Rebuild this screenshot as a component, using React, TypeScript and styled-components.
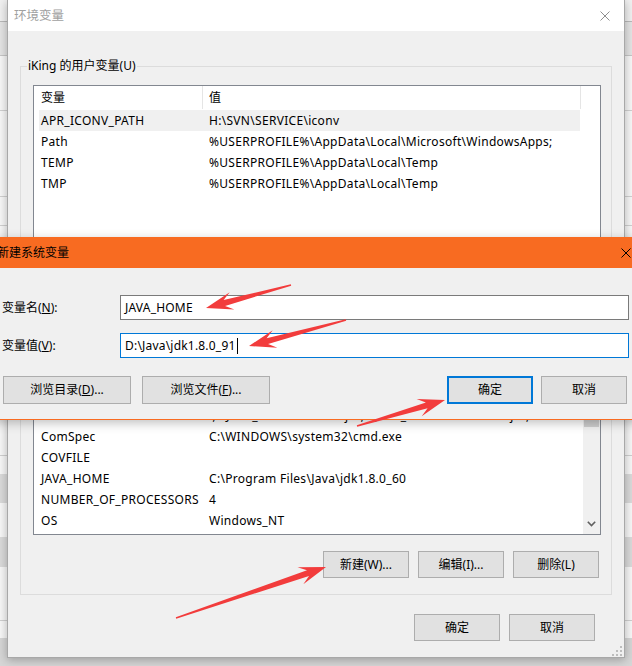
import React from "react";
import styled, { createGlobalStyle } from "styled-components";

const GlobalStyle = createGlobalStyle`
  html, body { margin: 0; padding: 0; }
  body {
    width: 632px; height: 666px; overflow: hidden; background: #f3f3f3;
    font-family: "Noto Sans", "Noto Sans CJK SC", sans-serif;
    font-size: 12px; color: #000;
  }
  #root { width: 632px; height: 666px; }
  * { box-sizing: border-box; }
`;

const Desktop = styled.div`
  position: relative;
  width: 632px;
  height: 666px;
  overflow: hidden;
  background-color: #f5f5f5;
  background-image:
    linear-gradient(to bottom,
      #f0f0f0 0, #f0f0f0 21px, #b9b9b9 21px, #b9b9b9 22px,
      #e4e4e4 22px, #e4e4e4 55px, #c6c6c6 55px, #c6c6c6 56px,
      #f7f7f7 56px, #f7f7f7 110px, #d0d0d0 110px, #d0d0d0 111px,
      #f7f7f7 111px, #f7f7f7 196px, #d0d0d0 196px, #d0d0d0 197px,
      #f7f7f7 197px, #f7f7f7 225px, #d0d0d0 225px, #d0d0d0 226px,
      #f7f7f7 226px, #f7f7f7 455px, #cfcfcf 455px, #cfcfcf 456px,
      #f7f7f7 456px, #f7f7f7 474px, #dadada 474px, #dadada 503px,
      #f7f7f7 503px, #f7f7f7 537px, #dadada 537px, #dadada 567px,
      #f7f7f7 567px, #f7f7f7 620px, #cfcfcf 620px, #cfcfcf 621px,
      #f7f7f7 621px, #f7f7f7 638px, #d6d6d6 638px, #d6d6d6 666px);
`;

/* ---------- main window ---------- */

const MainWindow = styled.div`
  position: absolute;
  left: 7px;
  top: 0;
  width: 618px;
  height: 658px;
  border: 1px solid #a8a8a8;
  border-top: none;
  background: #f0f0f0;
  display: flex;
  flex-direction: column;
  box-shadow: 0 2px 9px rgba(0, 0, 0, 0.28);
`;

const TitleBar = styled.div<{ $active?: boolean }>`
  flex: none;
  height: ${(p) => (p.$active ? 30 : 31)}px;
  background: ${(p) => (p.$active ? "#f86b21" : "#ffffff")};
  color: ${(p) => (p.$active ? "#000" : "#a0a0a0")};
  font-size: ${(p) => (p.$active ? 12 : 12.5)}px;
  display: flex;
  align-items: center;
  justify-content: space-between;
  padding: ${(p) => (p.$active ? "0 18px 0 6px" : "0 14px 0 6px")};
  line-height: 16px;
  white-space: nowrap;
`;

const CloseIcon = ({ color }: { color: string }) => (
  <svg width="10" height="10" viewBox="0 0 10 10">
    <path d="M0.5 0.5 L9.5 9.5 M9.5 0.5 L0.5 9.5" stroke={color} strokeWidth="1" fill="none" />
  </svg>
);

const WindowBody = styled.div`
  flex: 1;
  display: flex;
  flex-direction: column;
  padding: 35px 12px 0 12px;
  position: relative;
`;

const GroupBox = styled.div<{ $mt?: number }>`
  position: relative;
  border: 1px solid #dcdcdc;
  padding: 18px 10px 16px 12px;
  margin-top: ${(p) => p.$mt ?? 0}px;
`;

const GroupLabel = styled.span`
  position: absolute;
  top: -9px;
  left: 6px;
  padding: 0 1px;
  background: #f0f0f0;
  line-height: 16px;
  white-space: nowrap;
`;

const ListView = styled.div<{ $h: number }>`
  height: ${(p) => p.$h}px;
  border: 1px solid #828790;
  background: #fff;
  display: flex;
  overflow: hidden;
`;

const ListMain = styled.div`
  flex: 1;
  min-width: 0;
  display: flex;
  flex-direction: column;
`;

const HeaderRow = styled.div`
  flex: none;
  height: 23px;
  display: grid;
  grid-template-columns: 168px 378px 1fr;
`;

const HeaderCell = styled.div<{ $sep?: boolean }>`
  display: flex;
  align-items: center;
  padding-left: ${(p) => (p.$sep ? 6 : 7)}px;
  border-left: ${(p) => (p.$sep ? "1px solid #e5e5e5" : "none")};
  line-height: 16px;
`;

const Rows = styled.div`
  padding: 1px 0 0 5px;
  display: flex;
  flex-direction: column;
`;

const Row = styled.div<{ $selected?: boolean }>`
  width: 541px;
  height: 21px;
  display: grid;
  grid-template-columns: 163px 1fr;
  align-items: center;
  background: ${(p) => (p.$selected ? "#f0f0f0" : "transparent")};
  line-height: 16px;
  letter-spacing: 0.3px;
  white-space: nowrap;
`;

const NameCell = styled.span`
  padding-left: 2px;
  overflow: hidden;
`;

const ValueCell = styled.span`
  padding-left: 7px;
  overflow: hidden;
`;

const ScrollBar = styled.div`
  flex: none;
  width: 17px;
  background: #f0f0f0;
  display: flex;
  flex-direction: column;
  align-items: center;
  padding-top: 20px;
`;

const Thumb = styled.div`
  width: 15px;
  height: 47px;
  background: #cdcdcd;
`;

const ScrollSpacer = styled.div`
  flex: 1;
`;

const ArrowBox = styled.div`
  height: 17px;
  width: 17px;
  display: flex;
  align-items: center;
  justify-content: center;
  margin-bottom: 2px;
`;

const ButtonRow = styled.div<{ $mt: number; $mr?: number }>`
  display: flex;
  justify-content: flex-end;
  gap: 9px;
  margin-top: ${(p) => p.$mt}px;
  margin-right: ${(p) => p.$mr ?? 0}px;
`;

const WinButton = styled.div<{ $w?: number; $h?: number; $default?: boolean }>`
  width: ${(p) => p.$w ?? 86}px;
  height: ${(p) => p.$h ?? 27}px;
  background: #e1e1e1;
  border: ${(p) => (p.$default ? "2px solid #0078d7" : "1px solid #adadad")};
  display: flex;
  align-items: center;
  justify-content: center;
  line-height: 16px;
  white-space: nowrap;
`;

const SizeGrip = styled.svg`
  position: absolute;
  right: 2px;
  bottom: 1px;
`;

/* ---------- dialog ---------- */

const Dialog = styled.div`
  position: absolute;
  left: -10px;
  top: 237px;
  width: 660px;
  height: 183px;
  border: 1px solid #f86b21;
  background: #f0f0f0;
  display: flex;
  flex-direction: column;
  box-shadow: 0 3px 10px rgba(0, 0, 0, 0.25);
`;

const DialogBody = styled.div`
  flex: 1;
  padding: 27px 20px 15px 11px;
  display: flex;
  flex-direction: column;
`;

const FieldRow = styled.div<{ $mt?: number }>`
  display: grid;
  grid-template-columns: 118px 1fr;
  align-items: center;
  margin-top: ${(p) => p.$mt ?? 0}px;
`;

const FieldLabel = styled.label`
  line-height: 16px;
  white-space: nowrap;
`;

const TextBox = styled.div<{ $focused?: boolean }>`
  height: 25px;
  border: 1px solid ${(p) => (p.$focused ? "#0078d7" : "#7a7a7a")};
  background: #fff;
  display: flex;
  align-items: center;
  padding-left: 4px;
  line-height: 16px;
  letter-spacing: 0.2px;
  white-space: nowrap;
`;

const Caret = styled.span`
  display: inline-block;
  width: 1px;
  height: 16px;
  background: #000;
  margin-left: 1px;
`;

const DialogButtons = styled.div`
  display: flex;
  align-items: center;
  margin-top: 18px;
  padding: 0 2px 0 1px;
  gap: 11px;
`;

const Flex1 = styled.div`
  flex: 1;
`;

const RightButtons = styled.div`
  display: flex;
  gap: 8px;
`;

const Overlay = styled.svg`
  position: absolute;
  left: 0;
  top: 0;
  pointer-events: none;
`;

/* ---------- data ---------- */

const userVars = [
  ["APR_ICONV_PATH", "H:\\SVN\\SERVICE\\iconv"],
  ["Path", "%USERPROFILE%\\AppData\\Local\\Microsoft\\WindowsApps;"],
  ["TEMP", "%USERPROFILE%\\AppData\\Local\\Temp"],
  ["TMP", "%USERPROFILE%\\AppData\\Local\\Temp"],
];

const sysVars = [
  ["asl.log", "Destination=file"],
  ["CLASSPATH", ".;%JAVA_HOME%\\lib\\dt.jar;%JAVA_HOME%\\lib\\tools.jar;"],
  ["ComSpec", "C:\\WINDOWS\\system32\\cmd.exe"],
  ["COVFILE", ""],
  ["JAVA_HOME", "C:\\Program Files\\Java\\jdk1.8.0_60"],
  ["NUMBER_OF_PROCESSORS", "4"],
  ["OS", "Windows_NT"],
];

function arrowPoints(x1: number, y1: number, x2: number, y2: number) {
  const dx = x2 - x1;
  const dy = y2 - y1;
  const L = Math.hypot(dx, dy);
  const ux = dx / L;
  const uy = dy / L;
  const nx = -uy;
  const ny = ux;
  const pts: [number, number][] = [
    [0, -0.7],
    [L - 19, -3],
    [L - 27, -9],
    [L, 0],
    [L - 27, 9],
    [L - 19, 3],
    [0, 0.7],
  ];
  return pts
    .map(([u, v]) => `${(x1 + ux * u + nx * v).toFixed(1)},${(y1 + uy * u + ny * v).toFixed(1)}`)
    .join(" ");
}

const arrows: [number, number, number, number][] = [
  [291, 285, 206, 308],
  [346, 320, 249, 346],
  [357, 426, 445, 400],
  [176, 618, 326, 567],
];

const ListHeader = () => (
  <HeaderRow>
    <HeaderCell>变量</HeaderCell>
    <HeaderCell $sep>值</HeaderCell>
    <HeaderCell $sep />
  </HeaderRow>
);

export default function App() {
  return (
    <Desktop>
      <GlobalStyle />
      <MainWindow>
        <TitleBar>
          <span>环境变量</span>
          <CloseIcon color="#8f8f8f" />
        </TitleBar>
        <WindowBody>
          <GroupBox>
            <GroupLabel>iKing 的用户变量(U)</GroupLabel>
            <ListView $h={176}>
              <ListMain>
                <ListHeader />
                <Rows>
                  {userVars.map(([n, v], i) => (
                    <Row key={n} $selected={i === 0}>
                      <NameCell>{n}</NameCell>
                      <ValueCell>{v}</ValueCell>
                    </Row>
                  ))}
                </Rows>
              </ListMain>
            </ListView>
            <ButtonRow $mt={16} $mr={2}>
              <WinButton>新建(N)...</WinButton>
              <WinButton>编辑(E)...</WinButton>
              <WinButton>删除(D)</WinButton>
            </ButtonRow>
          </GroupBox>
          <GroupBox $mt={19}>
            <GroupLabel>系统变量(S)</GroupLabel>
            <ListView $h={176}>
              <ListMain>
                <ListHeader />
                <Rows>
                  {sysVars.map(([n, v]) => (
                    <Row key={n}>
                      <NameCell>{n}</NameCell>
                      <ValueCell>{v}</ValueCell>
                    </Row>
                  ))}
                </Rows>
              </ListMain>
              <ScrollBar>
                <Thumb />
                <ScrollSpacer />
                <ArrowBox>
                  <svg width="9" height="6" viewBox="0 0 9 6">
                    <path d="M0.8 0.8 L4.5 4.6 L8.2 0.8" stroke="#606060" strokeWidth="1.6" fill="none" />
                  </svg>
                </ArrowBox>
              </ScrollBar>
            </ListView>
            <ButtonRow $mt={16} $mr={2}>
              <WinButton>新建(W)...</WinButton>
              <WinButton>编辑(I)...</WinButton>
              <WinButton>删除(L)</WinButton>
            </ButtonRow>
          </GroupBox>
          <ButtonRow $mt={19} $mr={17}>
            <WinButton>确定</WinButton>
            <WinButton>取消</WinButton>
          </ButtonRow>
          <SizeGrip width="10" height="10" viewBox="0 0 10 10">
            {[
              [8, 0],
              [8, 4],
              [4, 4],
              [8, 8],
              [4, 8],
              [0, 8],
            ].map(([x, y]) => (
              <rect key={`${x}-${y}`} x={x} y={y} width="2" height="2" fill="#bdbdbd" />
            ))}
          </SizeGrip>
        </WindowBody>
      </MainWindow>

      <Dialog>
        <TitleBar $active>
          <span>新建系统变量</span>
          <CloseIcon color="#000" />
        </TitleBar>
        <DialogBody>
          <FieldRow>
            <FieldLabel>
              变量名(<u>N</u>):
            </FieldLabel>
            <TextBox>JAVA_HOME</TextBox>
          </FieldRow>
          <FieldRow $mt={13}>
            <FieldLabel>
              变量值(<u>V</u>):
            </FieldLabel>
            <TextBox $focused>
              D:\Java\jdk1.8.0_91
              <Caret />
            </TextBox>
          </FieldRow>
          <DialogButtons>
            <WinButton $w={128} $h={28}>
              浏览目录(<u>D</u>)...
            </WinButton>
            <WinButton $w={128} $h={28}>
              浏览文件(<u>F</u>)...
            </WinButton>
            <Flex1 />
            <RightButtons>
              <WinButton $h={28} $default>
                确定
              </WinButton>
              <WinButton $h={28}>取消</WinButton>
            </RightButtons>
          </DialogButtons>
        </DialogBody>
      </Dialog>

      <Overlay width="632" height="666" viewBox="0 0 632 666">
        {arrows.map(([a, b, c, d], i) => (
          <polygon key={i} points={arrowPoints(a, b, c, d)} fill="#f23c3c" />
        ))}
      </Overlay>
    </Desktop>
  );
}
